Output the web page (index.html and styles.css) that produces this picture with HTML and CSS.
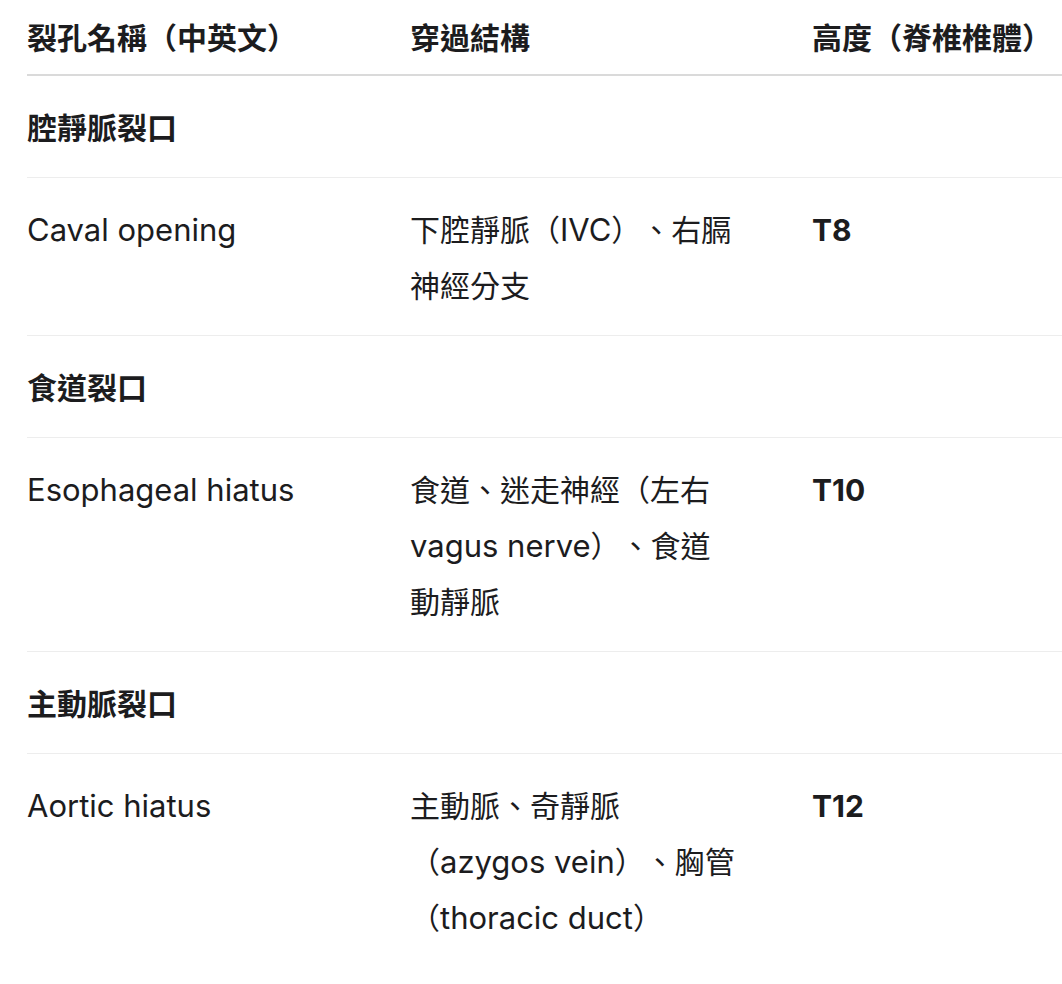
FILE: index.html
```html
<!DOCTYPE html>
<html lang="zh-Hant">
<head>
<meta charset="utf-8">
<title>膈肌裂孔</title>
<link rel="stylesheet" href="styles.css">
</head>
<body>
<div class="table-wrap">
  <table class="hiatus-table">
    <colgroup>
      <col class="col-name">
      <col class="col-struct">
      <col class="col-level">
    </colgroup>
    <thead>
      <tr>
        <th>裂孔名稱（中英文）</th>
        <th>穿過結構</th>
        <th>高度（脊椎椎體）</th>
      </tr>
    </thead>
    <tbody>
      <tr class="section">
        <td><strong>腔靜脈裂口</strong></td>
        <td></td>
        <td></td>
      </tr>
      <tr>
        <td><span class="en">Caval opening</span></td>
        <td>下腔靜脈（<span class="en">IVC</span>）、右膈<br>神經分支</td>
        <td><strong>T8</strong></td>
      </tr>
      <tr class="section">
        <td><strong>食道裂口</strong></td>
        <td></td>
        <td></td>
      </tr>
      <tr>
        <td><span class="en">Esophageal hiatus</span></td>
        <td>食道、迷走神經（左右<br><span class="en">vagus nerve</span>）、食道<br>動靜脈</td>
        <td><strong>T10</strong></td>
      </tr>
      <tr class="section">
        <td><strong>主動脈裂口</strong></td>
        <td></td>
        <td></td>
      </tr>
      <tr class="last">
        <td><span class="en">Aortic hiatus</span></td>
        <td>主動脈、奇靜脈<br>（<span class="en">azygos vein</span>）、胸管<br>（<span class="en">thoracic duct</span>）</td>
        <td><strong>T12</strong></td>
      </tr>
    </tbody>
  </table>
</div>
</body>
</html>
```

FILE: styles.css
```css
html, body {
  margin: 0;
  padding: 0;
  background: #ffffff;
}

body {
  font-family: "Inter", "Noto Sans CJK TC", sans-serif;
  font-size: 30px;
  line-height: 56px;
  color: #1c1c1e;
  overflow: hidden;
  text-spacing-trim: space-all;
}

.table-wrap {
  padding-left: 27px;
  overflow: hidden;
}

.hiatus-table {
  border-collapse: collapse;
  table-layout: fixed;
  width: 1065px;
}

.col-name { width: 383px; }
.col-struct { width: 402px; }
.col-level { width: 280px; }

.hiatus-table th {
  text-align: left;
  font-weight: 700;
  padding: 10px 0 8px;
  border-bottom: 2px solid #dadada;
  white-space: nowrap;
}

.hiatus-table td {
  padding: 24px 0 21px;
  vertical-align: top;
  border-bottom: 1px solid #ededed;
  white-space: nowrap;
}

.hiatus-table tr.last td {
  border-bottom: none;
}

.hiatus-table strong {
  font-weight: 700;
}

.en {
  font-size: 31px;
}
```
